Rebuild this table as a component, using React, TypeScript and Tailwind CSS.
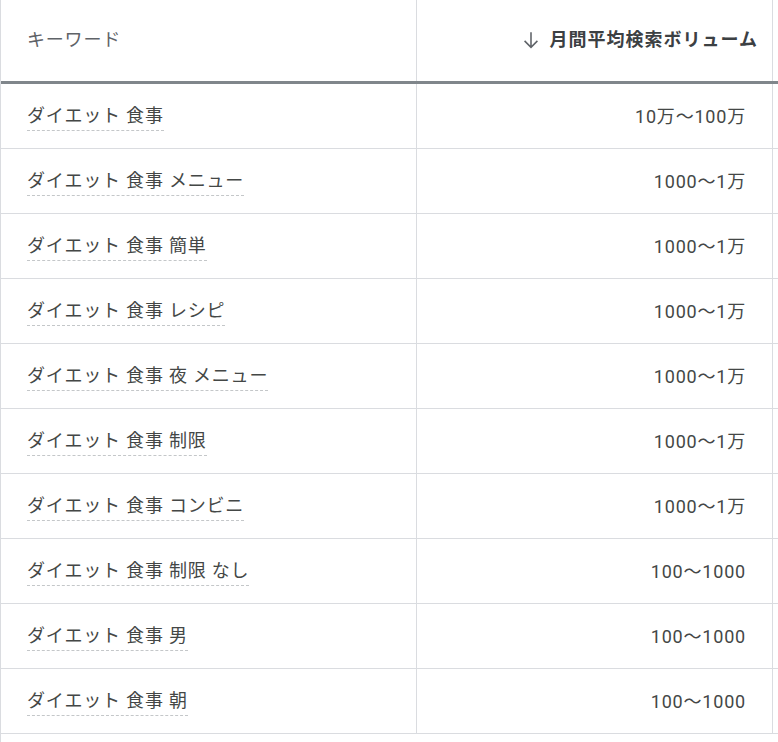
import React from "react";

const rows: [string, string][] = [
  ["ダイエット 食事", "10万〜100万"],
  ["ダイエット 食事 メニュー", "1000〜1万"],
  ["ダイエット 食事 簡単", "1000〜1万"],
  ["ダイエット 食事 レシピ", "1000〜1万"],
  ["ダイエット 食事 夜 メニュー", "1000〜1万"],
  ["ダイエット 食事 制限", "1000〜1万"],
  ["ダイエット 食事 コンビニ", "1000〜1万"],
  ["ダイエット 食事 制限 なし", "100〜1000"],
  ["ダイエット 食事 男", "100〜1000"],
  ["ダイエット 食事 朝", "100〜1000"],
];

export default function App() {
  return (
    <div
      className="w-[778px] h-[742px] overflow-hidden bg-white text-[18px] text-[#3c4043]"
      style={{ fontFamily: "Roboto, 'Noto Sans CJK JP', sans-serif" }}
    >
      <div className="w-[900px] border-l border-[#dadce0]">
        <div className="flex h-[84px] border-b-[3px] border-[#80868b]">
          <div className="w-[416px] shrink-0 border-r border-[#dadce0] flex items-center pl-[26px] pb-[2px] text-[#5f6368] tracking-[0.8px]">
            キーワード
          </div>
          <div className="w-[356px] shrink-0 border-r border-[#dadce0] flex items-center justify-end pr-[14px] pb-[2px] gap-[8px]">
            <svg width="22" height="22" viewBox="0 0 24 24" className="text-[#5f6368]">
              <path
                d="M12 3.5v16M5 13l7 7 7-7"
                fill="none"
                stroke="currentColor"
                strokeWidth="1.7"
              />
            </svg>
            <span className="font-bold tracking-[1px] text-[#3c4043]">月間平均検索ボリューム</span>
          </div>
          <div className="flex-1" />
        </div>
        {rows.map(([k, v], i) => (
          <div key={i} className="flex h-[65px] border-b border-[#dadce0]">
            <div className="w-[416px] shrink-0 border-r border-[#dadce0] flex items-center pl-[26px]">
              <span className="tracking-[0.8px] text-[#444746] border-b border-dashed border-[#c4c7c9] leading-[24px] pt-[2px] pb-[2px]">
                {k}
              </span>
            </div>
            <div className="w-[356px] shrink-0 border-r border-[#dadce0] flex items-center justify-end pr-[26px] tracking-[0.8px] text-[#444746]">
              {v}
            </div>
            <div className="flex-1" />
          </div>
        ))}
        <div className="h-[40px]" />
      </div>
    </div>
  );
}
